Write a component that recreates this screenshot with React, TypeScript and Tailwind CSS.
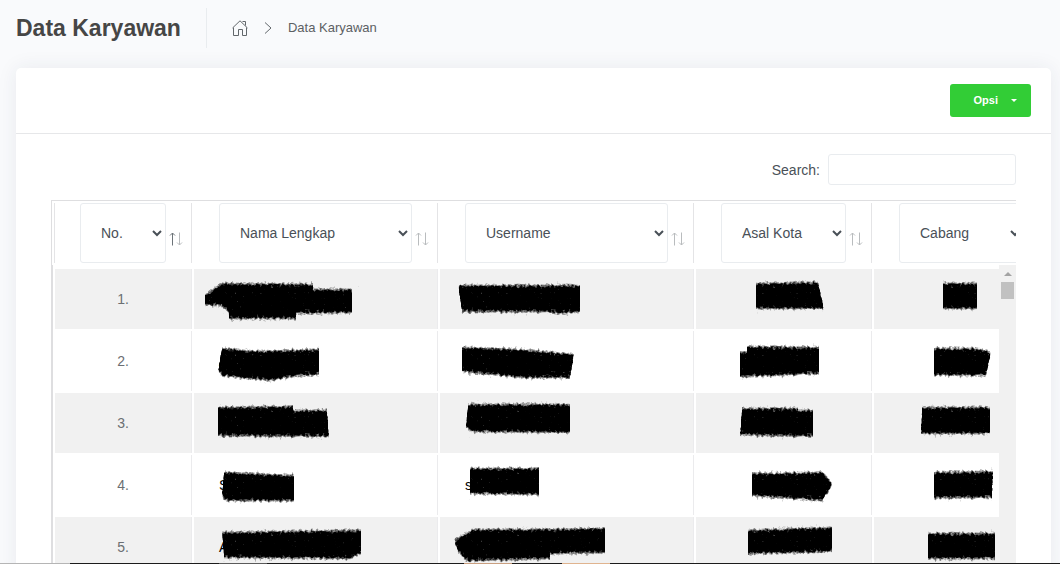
import { ReactNode } from "react";

type Column = {
  label: string;
  cell: string;
  select: string;
  sorted?: boolean;
};

const columns: Column[] = [
  { label: "No.", cell: "w-[138px] border-l", select: "w-[86px]", sorted: true },
  { label: "Nama Lengkap", cell: "w-[244px]", select: "w-[193px]" },
  { label: "Username", cell: "w-[254px]", select: "w-[203px]" },
  { label: "Asal Kota", cell: "w-[176px]", select: "w-[125px]" },
  { label: "Cabang", cell: "w-[176px]", select: "w-[125px]" },
];

// Marker strokes that hide the private values, in cell coordinates (60px high rows).
type Mark = { core: string; text?: string };

const rows: Mark[][] = [
  [
    { core: "M11 26 L28 14 L119 15 L119 20 L158 20 L158 44 L102 45 L102 50 L35 50 L35 44 L28 37 L11 36 Z" },
    { core: "M18 16 L140 16 L140 43 L122 45 L100 43 L22 43 Z" },
    { core: "M60 14 L122 13 L128 40 L60 40 Z" },
    { core: "M69 14 L103 14 L103 40 L69 40 Z" },
  ],
  [
    { core: "M28 17 L60 20 L125 18 L125 44 L96 46 L76 50 L28 45 L24 40 Z", text: "A" },
    { core: "M22 16 L80 18 L134 23 L130 47 L85 47 L22 41 Z" },
    { core: "M44 21 L51 21 L51 15 L123 16 L123 43 L44 46 Z" },
    { core: "M60 17 L103 17 L117 21 L112 45 L60 44 Z" },
  ],
  [
    { core: "M24 14 L99 13 L99 17 L133 17 L135 44 L24 43 Z" },
    { core: "M28 11 L130 11 L130 40 L32 39 L26 34 Z" },
    { core: "M46 15 L102 15 L102 17 L117 17 L117 44 L44 42 Z" },
    { core: "M48 14 L116 14 L116 41 L47 41 Z" },
  ],
  [
    { core: "M30 17 L100 20 L100 46 L32 46 L28 40 Z", text: "S" },
    { core: "M30 13 L99 13 L99 40 L30 39 Z", text: "s" },
    { core: "M56 18 L127 17 L137 30 L126 46 L56 41 Z" },
    { core: "M60 17 L119 16 L118 43 L60 43 Z" },
  ],
  [
    { core: "M28 15 L167 13 L167 37 L155 42 L30 41 Z", text: "A" },
    { core: "M14 23 L34 12 L110 12 L165 11 L165 36 L110 37 L110 42 L26 44 L18 34 Z" },
    { core: "M52 13 L136 10 L136 35 L52 37 Z" },
    { core: "M54 16 L121 16 L121 42 L54 42 Z" },
  ],
];

const Scribble = ({ mark }: { mark: Mark }) => (
  <svg
    className="absolute left-0 top-0 h-full w-full overflow-visible"
    aria-hidden="true"
  >
    <path d={mark.core} filter="url(#marker)" />
  </svg>
);

const MarkerFilter = () => (
  <svg className="absolute h-0 w-0" aria-hidden="true">
    <defs>
      <filter id="marker" x="-10%" y="-25%" width="120%" height="150%" colorInterpolationFilters="sRGB">
        <feGaussianBlur in="SourceGraphic" stdDeviation="0.4 2" result="soft" />
        <feTurbulence type="fractalNoise" baseFrequency="0.35" numOctaves="2" seed="4" />
        <feColorMatrix values="0 0 0 0 0  0 0 0 0 0  0 0 0 0 0  0 0 0 1 0" result="noise" />
        <feComposite in="soft" in2="noise" operator="arithmetic" k1="0" k2="2" k3="1.7" k4="-1.45" />
      </filter>
    </defs>
  </svg>
);

const SortArrows = ({ active }: { active?: boolean }) => (
  <svg width="14" height="14" viewBox="0 0 14 14" fill="none" aria-hidden="true">
    <path d="M3.5 13.5V1M1 3.5L3.5 1L6 3.5" stroke={active ? "#6c7378" : "#b9bcbe"} />
    <path d="M10.5 .5V13M8 10.5L10.5 13L13 10.5" stroke="#b9bcbe" />
  </svg>
);

const HomeIcon = () => (
  <svg width="16" height="16" viewBox="0 0 16 16" fill="none" stroke="#62676b" aria-hidden="true">
    <path d="M.5 8L8 .8L15.5 8M1.5 7.5V15.5H6.5V9.5H10.5V15.5H14.5V7.5M10.5 1.5H13.5V5.5" />
  </svg>
);

const Cell = ({ children, striped }: { children: ReactNode; striped: boolean }) => (
  <td
    className={
      striped
        ? "relative h-[60px] border-r border-[#ebebed] bg-[#f1f1f1] px-[25px] py-0"
        : "relative h-[60px] border-r border-[#ebebed] bg-white px-[25px] py-0"
    }
  >
    {children}
  </td>
);

const PageHeader = () => (
  <header className="flex h-14 shrink-0 items-center px-4">
    <h1 className="text-[23px] font-bold text-[#464646]">Data Karyawan</h1>
    <nav
      aria-label="Breadcrumb"
      className="ml-[25px] flex h-10 items-center border-l border-[#e9ecef] pl-[25px] text-[13px] text-[#5c6063]"
    >
      <a href="#" aria-label="Home">
        <HomeIcon />
      </a>
      <svg width="8" height="12" viewBox="0 0 8 12" fill="none" stroke="#62676b" className="ml-4" aria-hidden="true">
        <path d="M1 .5L7 6L1 11.5" />
      </svg>
      <a href="#" className="ml-4">
        Data Karyawan
      </a>
    </nav>
  </header>
);

const TableHead = () => (
  <table className="w-max table-fixed border-separate border-spacing-[2px]">
    <thead>
      <tr>
        {columns.map((column) => (
          <th key={column.label} className={`border-r border-[#e4e4e6] p-0 font-normal ${column.cell}`}>
            <div className="flex items-center pl-[25px]">
              <select
                aria-label={column.label}
                className={`h-[60px] shrink-0 rounded-[3px] border border-[#e9ecef] bg-white pl-4 text-sm text-[#495057] ${column.select}`}
              >
                <option>{column.label}</option>
              </select>
              <button aria-label={`Urutkan ${column.label}`} className="ml-[3px] mt-3">
                <SortArrows active={column.sorted} />
              </button>
            </div>
          </th>
        ))}
      </tr>
    </thead>
  </table>
);

const TableBody = () => (
  <div className="flex border-l border-[#dedee0]">
    <div className="min-w-0 flex-1 overflow-hidden pt-[2px]">
      <table className="w-max table-fixed border-separate border-spacing-[2px] text-sm text-[#6b6f73]">
        <colgroup>
          <col className="w-[137px]" />
          <col className="w-[244px]" />
          <col className="w-[254px]" />
          <col className="w-[176px]" />
          <col className="w-[176px]" />
        </colgroup>
        <tbody>
          {rows.map((marks, index) => (
            <tr key={index}>
              <Cell striped={index % 2 === 0}>
                <p className="w-[86px] text-center">{index + 1}.</p>
              </Cell>
              {marks.map((mark, i) => (
                <Cell key={i} striped={index % 2 === 0}>
                  <span className="text-black">{mark.text}</span>
                  <Scribble mark={mark} />
                </Cell>
              ))}
            </tr>
          ))}
        </tbody>
      </table>
    </div>
    <div className="flex w-[17px] shrink-0 flex-col items-center gap-[6px] bg-[#f1f1f1] pt-[7px]">
      <span className="h-0 w-0 border-x-4 border-b-4 border-x-transparent border-b-[#a3a3a3]" />
      <span className="h-[17px] w-[13px] bg-[#c1c1c1]" />
    </div>
  </div>
);

const App = () => {
  return (
    <div className="flex h-screen flex-col overflow-hidden bg-[#f9fafc] font-['Liberation_Sans',Arial,sans-serif]">
      <MarkerFilter />
      <div className="min-h-0 flex-1 overflow-hidden">
        <PageHeader />
        <main className="ml-4 mr-[9px] mt-3 rounded-t-[5px] bg-white shadow-[0_0_20px_rgba(40,50,80,0.08)]">
          <div className="flex justify-end border-b border-[#e6e7e9] px-5 py-4">
            <button className="flex h-[33px] items-center rounded-[3px] bg-[#32cd36] pl-6 pr-[14px] text-[11px] font-bold text-white">
              Opsi
              <span className="ml-[13px] h-0 w-0 border-x-[3px] border-t-[3px] border-x-transparent border-t-white" />
            </button>
          </div>
          <section className="px-[35px] pt-5">
            <label className="mb-[15px] flex items-center justify-end gap-2 text-sm text-[#495057]">
              Search:
              <input type="search" className="h-[31px] w-[188px] rounded-[3px] border border-[#e9ecef] bg-white px-2" />
            </label>
            <div className="overflow-hidden border-l border-t border-[#dedee0]">
              <TableHead />
              <TableBody />
            </div>
          </section>
        </main>
      </div>
      <footer className="flex h-px shrink-0 bg-[#1c1c1c]">
        <span className="w-[70px] bg-[#b5b5b5]" />
        <span className="ml-[149px] w-12 bg-[#5a5a5a]" />
        <span className="ml-[197px] w-12 bg-[#c99f80]" />
        <span className="ml-[50px] w-12 bg-[#e0b48f]" />
      </footer>
    </div>
  );
};

export default App;
